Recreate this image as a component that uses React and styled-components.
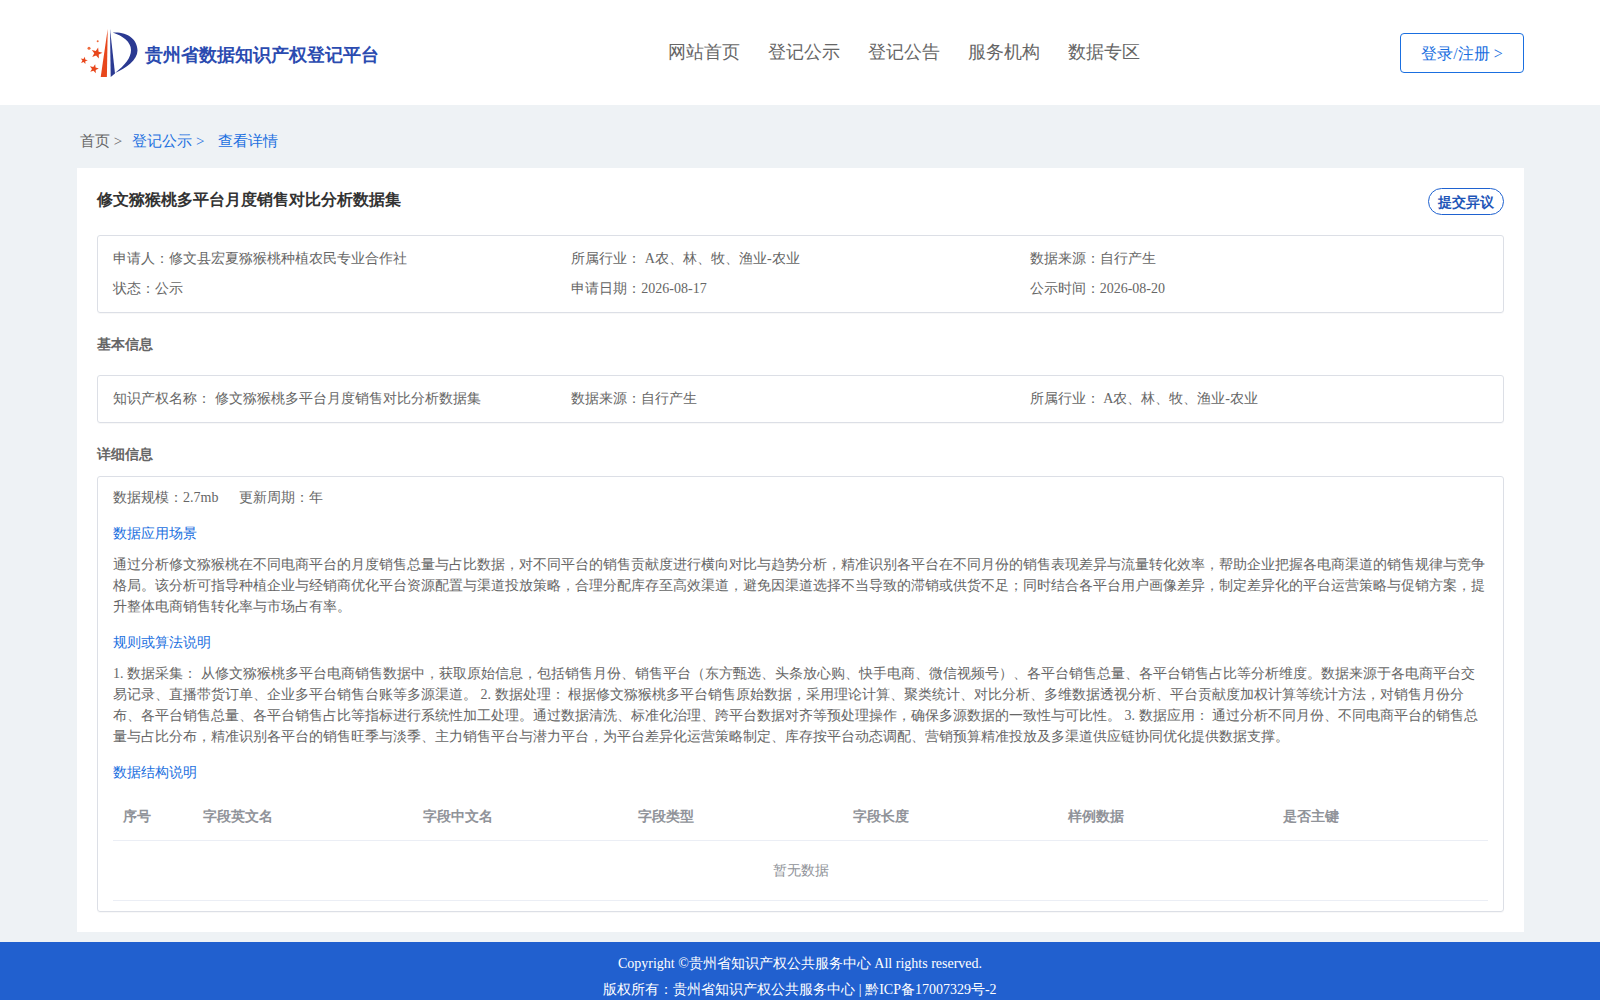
import React from "react";
import styled, { createGlobalStyle } from "styled-components";

const Global = createGlobalStyle`
  html, body { margin: 0; padding: 0; background: #eef2f5; }
  body { font-family: "Liberation Serif", serif; font-size: 14px; color: #666; text-spacing-trim: space-all; }
  * { box-sizing: border-box; }
`;

const Header = styled.header`
  height: 105px;
  background: #fff;
  display: grid;
  grid-template-columns: 588px 732px 124px;
  align-items: center;
  padding: 0 75px 0 80px;
`;
const Brand = styled.div`display: flex; align-items: center; gap: 6px; padding-top: 2px;`;
const BrandName = styled.span`font-size: 18px; font-weight: 700; color: #2b4bb0; white-space: nowrap; padding-top: 2px;`;
const Nav = styled.nav`display: flex; gap: 28px; margin-top: -1px;`;
const NavItem = styled.a`font-size: 18px; color: #666; white-space: nowrap;`;
const LoginButton = styled.button`
  width: 124px; height: 40px;
  padding: 3px 0 0;
  font: inherit; font-size: 16px;
  color: #1a6fe0; background: #fff;
  border: 1px solid #1a6fe0; border-radius: 4px;
`;
const Crumbs = styled.div`
  height: 63px;
  padding: 26px 0 0 80px;
  font-size: 15px;
  line-height: 20px;
  display: flex;
`;
const Crumb = styled.span`
  color: ${p => (p.$link ? "#1a6fe0" : "#666")};
  margin-right: ${p => p.$gap}px;
  white-space: nowrap;
`;
const Card = styled.main`
  margin: 0 76px 10px 77px;
  background: #fff;
  padding: 20px;
  height: 764px;
`;
const TitleRow = styled.div`display: flex; justify-content: space-between; align-items: flex-start; height: 47px;`;
const Title = styled.h1`margin: 0; font-size: 16px; line-height: 24px; font-weight: 700; color: #333;`;
const Objection = styled.button`
  width: 76px; height: 27px; padding: 2px 0 0;
  font: inherit; font-size: 14px; font-weight: 700;
  color: #1f56b8; background: #fff;
  border: 1px solid #1f62d0; border-radius: 13.5px;
`;
const Box = styled.section`
  border: 1px solid #dcdfe6;
  border-radius: 3px;
  padding: ${p => p.$pad};
  box-shadow: 0 1px 1px rgba(0,0,0,.03);
`;
const InfoGrid = styled.div`
  display: grid;
  grid-template-columns: repeat(3, 1fr);
  row-gap: 9px;
  line-height: 21px;
`;
const Heading = styled.h2`
  margin: ${p => p.$m};
  font-size: 14px;
  font-weight: 700;
  line-height: 21px;
  color: #666;
`;
const Meta = styled.div`display: flex; gap: 21px; line-height: 21px; margin-bottom: 15px;`;
const SubTitle = styled.div`color: #1a6fe0; line-height: 21px; margin-bottom: ${p => p.$mb || 10}px;`;
const Para = styled.p`margin: 0 0 15px; line-height: 21px;`;
const Table = styled.table`
  width: 100%;
  table-layout: fixed;
  border-collapse: collapse;
`;
const Th = styled.th`
  width: ${p => p.$w}px;
  height: 46px;
  padding: 1px 10px 0;
  text-align: left;
  font-size: 14px;
  font-weight: 700;
  color: #909399;
  border-bottom: 1px solid #ebeef5;
`;
const Empty = styled.td`
  height: 60px;
  padding-top: 2px;
  text-align: center;
  color: #909399;
  border-bottom: 1px solid #ebeef5;
`;
const Footer = styled.footer`
  background: #2160cf;
  color: #fff;
  text-align: center;
  line-height: 26px;
  padding: 9px 0 6px;
`;

const Star = ({ cx, cy, r, rot = 0.25 }) => {
  const pts = [];
  for (let i = 0; i < 10; i++) {
    const a = -Math.PI / 2 + rot + (i * Math.PI) / 5;
    const rr = i % 2 ? r * 0.42 : r;
    pts.push(`${(cx + rr * Math.cos(a)).toFixed(2)},${(cy + rr * Math.sin(a)).toFixed(2)}`);
  }
  return <polygon points={pts.join(" ")} fill="#e8471c" />;
};

const Logo = () => (
  <svg width="59" height="52" viewBox="0 0 59 52">
    <Star cx={16.7} cy={25.2} r={5.8} />
    <Star cx={4} cy={32.5} r={3.8} />
    <Star cx={14} cy={40.8} r={4.8} />
    <circle cx={9} cy={20.2} r={1.5} fill="#ee6a3c" />
    <circle cx={17.7} cy={13.2} r={1} fill="#ee6a3c" />
    <path d="M27.7 1 L20.7 49 L26.9 49 Z" fill="#e8471c" />
    <path d="M30 1 L30.7 49 L35 45.5 Z" fill="#2b3a92" />
    <path d="M32.7 4.5 C47 3.5 57.5 11 57.5 22.5 C57.5 32 46 40 35 45 C45 37 51 30 51 22 C51 14 43 8 32.7 4.5 Z" fill="#2b3a92" />
  </svg>
);

const cols = [
  ["序号", 80], ["字段英文名", 220], ["字段中文名", 215], ["字段类型", 215],
  ["字段长度", 215], ["样例数据", 215], ["是否主键", 215],
];

export default function App() {
  return (
    <>
      <Global />
      <Header>
        <Brand><Logo /><BrandName>贵州省数据知识产权登记平台</BrandName></Brand>
        <Nav>
          {["网站首页", "登记公示", "登记公告", "服务机构", "数据专区"].map(t => <NavItem key={t}>{t}</NavItem>)}
        </Nav>
        <LoginButton>登录/注册 &gt;</LoginButton>
      </Header>
      <Crumbs>
        <Crumb $gap={10}>首页 &gt;</Crumb>
        <Crumb $link $gap={14}>登记公示 &gt;</Crumb>
        <Crumb $link>查看详情</Crumb>
      </Crumbs>
      <Card>
        <TitleRow>
          <Title>修文猕猴桃多平台月度销售对比分析数据集</Title>
          <Objection>提交异议</Objection>
        </TitleRow>
        <Box $pad="12px 15px 13px">
          <InfoGrid>
            <div>申请人：修文县宏夏猕猴桃种植农民专业合作社</div>
            <div>所属行业： A农、林、牧、渔业-农业</div>
            <div>数据来源：自行产生</div>
            <div>状态：公示</div>
            <div>申请日期：2026-08-17</div>
            <div>公示时间：2026-08-20</div>
          </InfoGrid>
        </Box>
        <Heading $m="21px 0 20px">基本信息</Heading>
        <Box $pad="12px 15px 13px">
          <InfoGrid>
            <div>知识产权名称： 修文猕猴桃多平台月度销售对比分析数据集</div>
            <div>数据来源：自行产生</div>
            <div>所属行业： A农、林、牧、渔业-农业</div>
          </InfoGrid>
        </Box>
        <Heading $m="21px 0 11px">详细信息</Heading>
        <Box $pad="10px 15px 10px">
          <Meta><span>数据规模：2.7mb</span><span>更新周期：年</span></Meta>
          <SubTitle>数据应用场景</SubTitle>
          <Para>通过分析修文猕猴桃在不同电商平台的月度销售总量与占比数据，对不同平台的销售贡献度进行横向对比与趋势分析，精准识别各平台在不同月份的销售表现差异与流量转化效率，帮助企业把握各电商渠道的销售规律与竞争格局。该分析可指导种植企业与经销商优化平台资源配置与渠道投放策略，合理分配库存至高效渠道，避免因渠道选择不当导致的滞销或供货不足；同时结合各平台用户画像差异，制定差异化的平台运营策略与促销方案，提升整体电商销售转化率与市场占有率。</Para>
          <SubTitle>规则或算法说明</SubTitle>
          <Para>1. 数据采集： 从修文猕猴桃多平台电商销售数据中，获取原始信息，包括销售月份、销售平台（东方甄选、头条放心购、快手电商、微信视频号）、各平台销售总量、各平台销售占比等分析维度。数据来源于各电商平台交易记录、直播带货订单、企业多平台销售台账等多源渠道。 2. 数据处理： 根据修文猕猴桃多平台销售原始数据，采用理论计算、聚类统计、对比分析、多维数据透视分析、平台贡献度加权计算等统计方法，对销售月份分布、各平台销售总量、各平台销售占比等指标进行系统性加工处理。通过数据清洗、标准化治理、跨平台数据对齐等预处理操作，确保多源数据的一致性与可比性。 3. 数据应用： 通过分析不同月份、不同电商平台的销售总量与占比分布，精准识别各平台的销售旺季与淡季、主力销售平台与潜力平台，为平台差异化运营策略制定、库存按平台动态调配、营销预算精准投放及多渠道供应链协同优化提供数据支撑。</Para>
          <SubTitle $mb={11}>数据结构说明</SubTitle>
          <Table>
            <thead>
              <tr>{cols.map(([t, w]) => <Th key={t} $w={w}>{t}</Th>)}</tr>
            </thead>
            <tbody>
              <tr><Empty colSpan={7}>暂无数据</Empty></tr>
            </tbody>
          </Table>
        </Box>
      </Card>
      <Footer>
        <div>Copyright ©贵州省知识产权公共服务中心 All rights reserved.</div>
        <div>版权所有：贵州省知识产权公共服务中心 | 黔ICP备17007329号-2</div>
      </Footer>
    </>
  );
}
